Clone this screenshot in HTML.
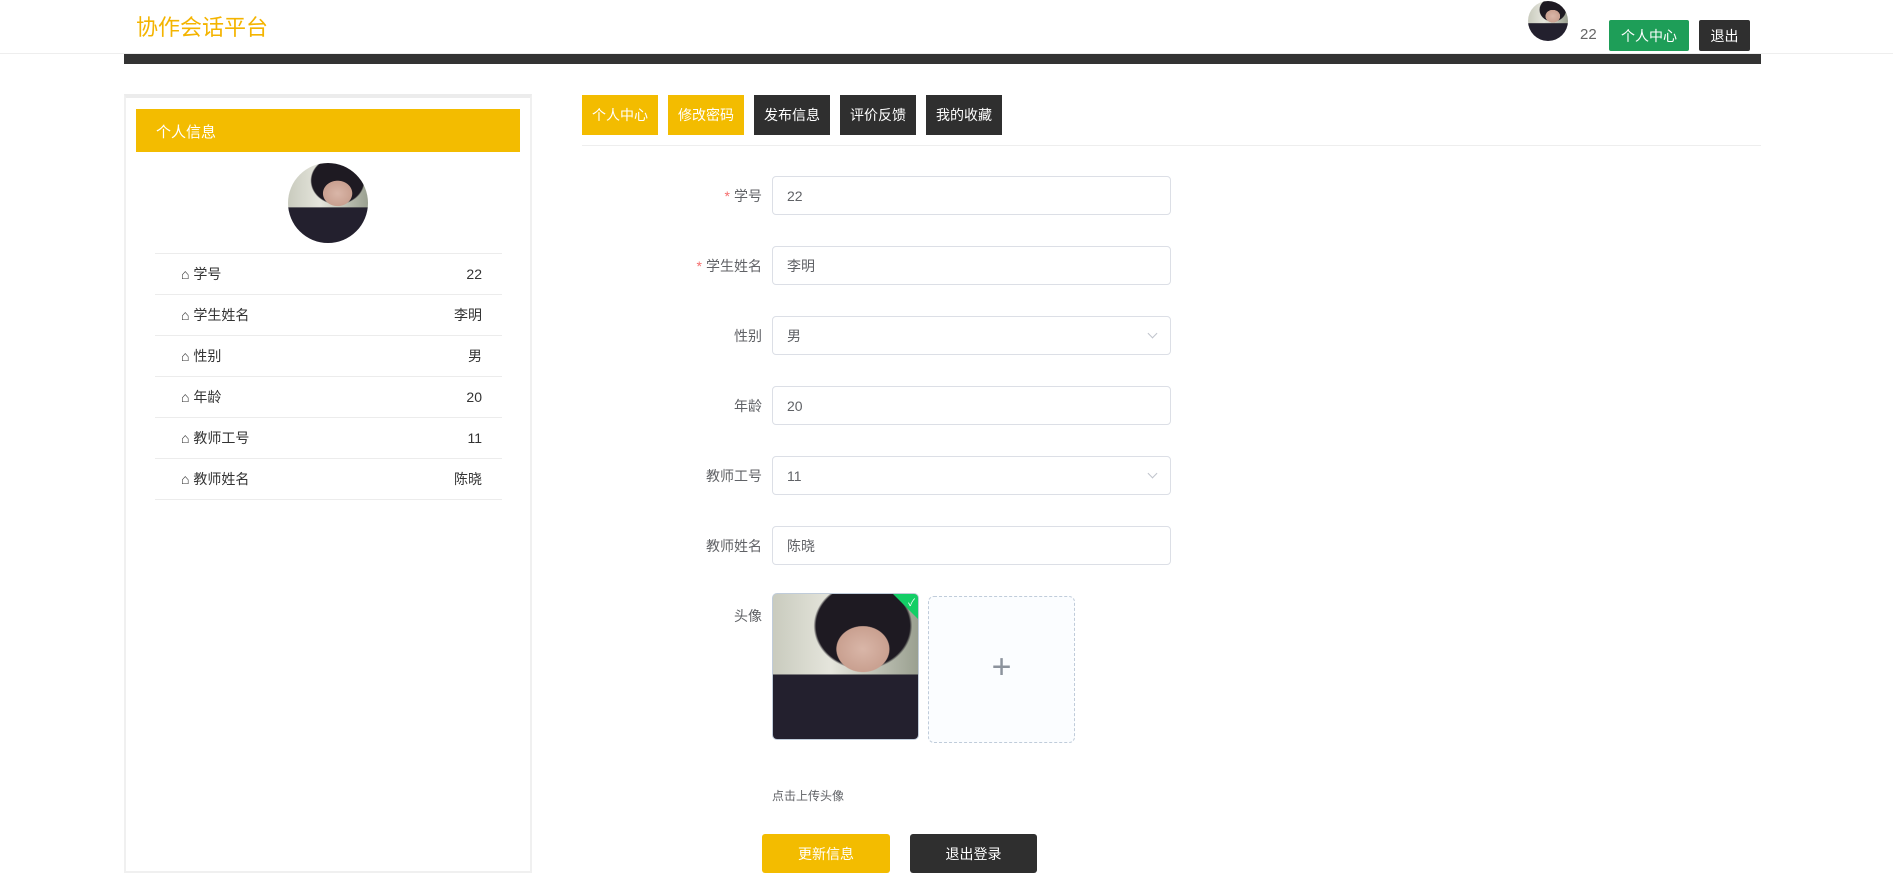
<!DOCTYPE html>
<html><head><meta charset="utf-8"><style>
*{box-sizing:border-box;margin:0;padding:0}
body{width:1893px;height:879px;background:#fff;font-family:"Liberation Sans","Noto Sans CJK SC",sans-serif;position:relative;overflow:hidden;color:#333}
.a{position:absolute}
.photo{background:radial-gradient(ellipse 30% 26% at 62% 38%,#d9b6a8 0,#c9a090 60%,transparent 62%),radial-gradient(ellipse 34% 30% at 62% 22%,#1e1a22 0,#1e1a22 95%,transparent 100%),linear-gradient(180deg,transparent 55%,#23202e 56%),linear-gradient(90deg,#c9cbbe,#e5e5dc 40%,#9aa090);}
.btn{position:absolute;color:#fff;font-size:14px;display:flex;align-items:center;justify-content:center}
.row{position:absolute;left:155px;width:347px;height:41px;border-bottom:1px solid #ececec;font-size:14px;color:#333;display:flex;align-items:center;justify-content:space-between;padding:0 20px 0 26px}
.lab{position:absolute;right:1131px;font-size:14px;color:#606266;text-align:right}
.lab i{color:#f56c6c;font-style:normal;margin-right:4px}
.inp{position:absolute;left:772px;width:399px;height:39px;border:1px solid #dcdfe6;border-radius:4px;font-size:14px;color:#606266;padding:0 0 0 14px;display:flex;align-items:center}
.arr{position:absolute;right:14px;top:13px;width:7px;height:7px;border-right:1px solid #c0c4cc;border-bottom:1px solid #c0c4cc;transform:rotate(45deg)}
</style></head><body>
<div class="a" style="left:0;top:53px;width:1893px;height:1px;background:#eee"></div>
<div class="a" style="left:136px;top:10px;font-size:22px;color:#f4b400">协作会话平台</div>
<div class="a photo" style="left:1528px;top:1px;width:40px;height:40px;border-radius:50%"></div>
<div class="a" style="left:1580px;top:26px;font-size:15px;color:#666">22</div>
<div class="btn" style="left:1609px;top:20px;width:80px;height:31px;background:#1e9e58;border-radius:2px">个人中心</div>
<div class="btn" style="left:1699px;top:20px;width:51px;height:31px;background:#2f2f2f;border-radius:2px">退出</div>
<div class="a" style="left:124px;top:54px;width:1637px;height:10px;background:#333"></div>

<div class="a" style="left:124px;top:94px;width:408px;height:779px;border:2px solid #f0f0f0;border-top:4px solid #ececec"></div>
<div class="a" style="left:136px;top:109px;width:384px;height:43px;background:#f3bc00;color:#fff;font-size:15px;padding:12px 0 0 20px">个人信息</div>
<div class="a photo" style="left:288px;top:163px;width:80px;height:80px;border-radius:50%"></div>
<div class="a" style="left:155px;top:253px;width:347px;height:1px;background:#ececec"></div>
<div class="row" style="top:254px"><span>⌂ 学号</span><span>22</span></div>
<div class="row" style="top:295px"><span>⌂ 学生姓名</span><span>李明</span></div>
<div class="row" style="top:336px"><span>⌂ 性别</span><span>男</span></div>
<div class="row" style="top:377px"><span>⌂ 年龄</span><span>20</span></div>
<div class="row" style="top:418px"><span>⌂ 教师工号</span><span>11</span></div>
<div class="row" style="top:459px"><span>⌂ 教师姓名</span><span>陈晓</span></div>

<div class="btn" style="left:582px;top:95px;width:76px;height:40px;background:#f3bc00">个人中心</div>
<div class="btn" style="left:668px;top:95px;width:76px;height:40px;background:#f3bc00">修改密码</div>
<div class="btn" style="left:754px;top:95px;width:76px;height:40px;background:#2f2f2f">发布信息</div>
<div class="btn" style="left:840px;top:95px;width:76px;height:40px;background:#2f2f2f">评价反馈</div>
<div class="btn" style="left:926px;top:95px;width:76px;height:40px;background:#2f2f2f">我的收藏</div>
<div class="a" style="left:582px;top:145px;width:1179px;height:1px;background:#eee"></div>

<div class="lab" style="top:186px"><i>*</i>学号</div><div class="inp" style="top:176px">22</div>
<div class="lab" style="top:256px"><i>*</i>学生姓名</div><div class="inp" style="top:246px">李明</div>
<div class="lab" style="top:326px">性别</div><div class="inp" style="top:316px">男<span class="arr"></span></div>
<div class="lab" style="top:396px">年龄</div><div class="inp" style="top:386px">20</div>
<div class="lab" style="top:466px">教师工号</div><div class="inp" style="top:456px">11<span class="arr"></span></div>
<div class="lab" style="top:536px">教师姓名</div><div class="inp" style="top:526px">陈晓</div>
<div class="lab" style="top:606px">头像</div>
<div class="a photo" style="left:772px;top:593px;width:147px;height:147px;border-radius:5px;border:1px solid #c0ccda;overflow:hidden"><div class="a" style="right:-17px;top:-7px;width:40px;height:24px;background:#13ce66;transform:rotate(45deg)"></div><div class="a" style="right:3px;top:0;color:#fff;font-size:10px">✓</div></div>
<div class="a" style="left:928px;top:596px;width:147px;height:147px;border:1px dashed #c0ccda;border-radius:6px;background:#fbfdff;color:#8c939d;font-size:34px;font-weight:100;text-align:center;line-height:140px">+</div>
<div class="a" style="left:772px;top:787px;font-size:12px;color:#606266">点击上传头像</div>
<div class="btn" style="left:762px;top:834px;width:128px;height:39px;background:#f3bc00;border-radius:3px">更新信息</div>
<div class="btn" style="left:910px;top:834px;width:127px;height:39px;background:#2f2f2f;border-radius:3px">退出登录</div>
</body></html>
